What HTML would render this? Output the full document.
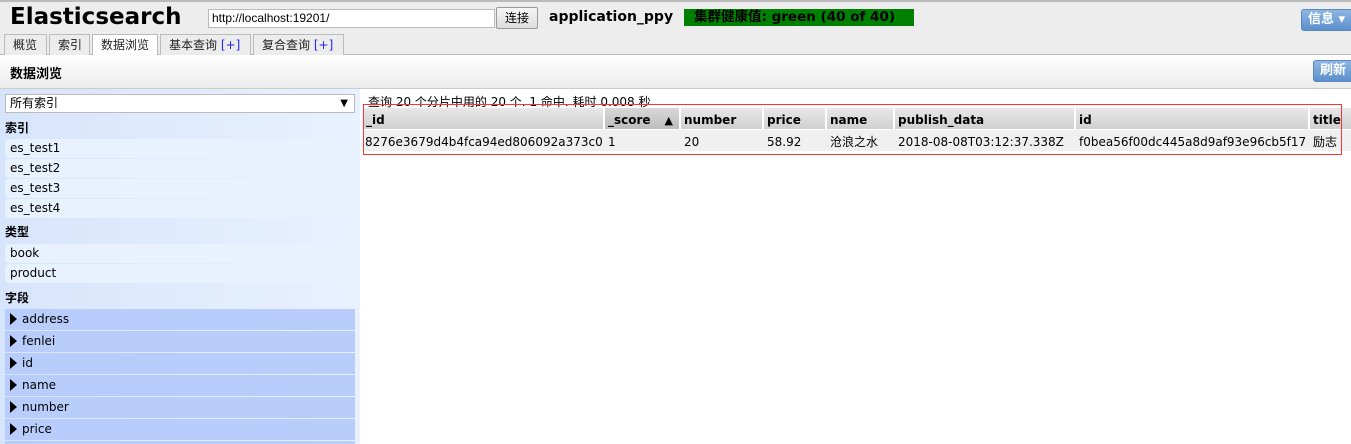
<!DOCTYPE html>
<html><head><meta charset="utf-8"><style>
*{box-sizing:border-box;margin:0;padding:0}
html,body{width:1351px;height:444px;overflow:hidden}
body{background:#fff;font-family:"DejaVu Sans","Noto Sans CJK SC",sans-serif;font-size:12px;color:#000;position:relative}
.a{position:absolute}
.top{left:0;top:0;width:1351px;height:55px;background:#ededed;border-top:2px solid #bbb;border-bottom:1px solid #bbb}
.tab{top:34px;height:21px;border:1px solid #bbb;border-bottom:none;background:#ececec;font-size:12px;line-height:21px;padding-left:8px;color:#222}
.tab.act{background:#fff;height:22px}
.plus{color:#22f}
.bar{left:0;top:55px;width:1351px;height:34px;background:linear-gradient(#fff,#ececec);border-bottom:1px solid #ccc}
.btn{background:linear-gradient(#8fb6e4,#5c8fcc);color:#fff;font-weight:bold;border:1px solid #5a87c0;border-radius:3px;font-size:13px;line-height:19px;padding-left:6px}
.side{left:0;top:89px;width:360px;height:355px;background:linear-gradient(90deg,#d7e5fc,#e8f1fe)}
.lbl{left:5px;font-weight:bold;font-size:12px}
.it{left:5px;width:350px;height:19px;background:#e8f1fe;border-radius:4px;padding-left:5px;line-height:19px;font-size:12px}
.fd{left:5px;width:350px;height:21px;background:#b8cdfb;padding-left:5px;line-height:21px;font-size:12px}
.tri{display:inline-block;width:0;height:0;border-left:7px solid #000;border-top:6px solid transparent;border-bottom:6px solid transparent;vertical-align:-2px;margin-right:5px}
.th{top:108px;height:21px;background:linear-gradient(#e8e8e8,#cfcfcf);font-weight:bold;font-size:12px;line-height:21px;padding:2px 0 0 3px;border-right:2px solid #fff}
.td{top:130px;height:21px;background:#f0f0f0;font-size:12px;line-height:21px;padding:2px 0 0 3px;white-space:nowrap;overflow:hidden}
</style></head><body>
<div class="a top"></div>
<div class="a" style="left:10px;top:4px;font-size:23px;font-weight:bold">Elasticsearch</div>
<div class="a" style="left:208px;top:9px;width:287px;height:19px;background:#fff;border:1px solid #bbb;font-family:'Liberation Sans',sans-serif;font-size:12px;line-height:17px;padding-left:3px">http://localhost:19201/</div>
<div class="a" style="left:496px;top:7px;width:42px;height:22px;background:linear-gradient(#f6f6f6,#ddd);border:1px solid #999;border-radius:2px;text-align:center;line-height:20px;font-size:12px">连接</div>
<div class="a" style="left:549px;top:9px;font-size:14px;font-weight:bold">application_ppy</div>
<div class="a" style="left:684px;top:9px;width:230px;height:17px;background:#008000;color:#000;font-weight:bold;font-size:13.5px;line-height:17px;padding-left:10px">集群健康值: green (40 of 40)</div>
<div class="a btn" style="left:1301px;top:9px;width:52px;height:22px">信息 ▾</div>
<div class="a tab" style="left:4px;width:43px">概览</div>
<div class="a tab" style="left:49px;width:41px">索引</div>
<div class="a tab act" style="left:92px;width:66px">数据浏览</div>
<div class="a tab" style="left:160px;width:91px">基本查询 <span class="plus">[+]</span></div>
<div class="a tab" style="left:253px;width:91px">复合查询 <span class="plus">[+]</span></div>
<div class="a bar"></div>
<div class="a" style="left:10px;top:63px;font-weight:bold;font-size:13px">数据浏览</div>
<div class="a btn" style="left:1313px;top:60px;width:40px;height:22px">刷新</div>
<div class="a side"></div>
<div class="a" style="left:5px;top:94px;width:350px;height:19px;background:#fff;border:1px solid #bbb;line-height:17px;padding-left:4px;font-size:12px">所有索引<span style="position:absolute;right:6px;font-size:10px">▼</span></div>
<div class="a lbl" style="top:119px">索引</div>
<div class="a it" style="top:139px">es_test1</div>
<div class="a it" style="top:159px">es_test2</div>
<div class="a it" style="top:179px">es_test3</div>
<div class="a it" style="top:199px">es_test4</div>
<div class="a lbl" style="top:223px">类型</div>
<div class="a it" style="top:244px">book</div>
<div class="a it" style="top:264px">product</div>
<div class="a lbl" style="top:289px">字段</div>
<div class="a fd" style="top:309px"><span class="tri"></span>address</div>
<div class="a fd" style="top:331px"><span class="tri"></span>fenlei</div>
<div class="a fd" style="top:353px"><span class="tri"></span>id</div>
<div class="a fd" style="top:375px"><span class="tri"></span>name</div>
<div class="a fd" style="top:397px"><span class="tri"></span>number</div>
<div class="a fd" style="top:419px"><span class="tri"></span>price</div>
<div class="a fd" style="top:441px;height:3px"></div>
<div class="a" style="left:368px;top:93px;font-size:12px">查询 20 个分片中用的 20 个. 1 命中. 耗时 0.008 秒</div>
<div class="a th" style="left:363px;width:242px">_id</div>
<div class="a th" style="left:605px;width:76px;background:linear-gradient(#d8d8d8,#bdbdbd)">_score <span style="float:right;margin-right:6px;font-size:11px">▲</span></div>
<div class="a th" style="left:681px;width:83px">number</div>
<div class="a th" style="left:764px;width:63px">price</div>
<div class="a th" style="left:827px;width:68px">name</div>
<div class="a th" style="left:895px;width:181px">publish_data</div>
<div class="a th" style="left:1076px;width:234px">id</div>
<div class="a th" style="left:1310px;width:41px;border-right:none">title</div>
<div class="a td" style="left:363px;width:242px;padding-left:2px">8276e3679d4b4fca94ed806092a373c0</div>
<div class="a td" style="left:605px;width:76px">1</div>
<div class="a td" style="left:681px;width:83px">20</div>
<div class="a td" style="left:764px;width:63px">58.92</div>
<div class="a td" style="left:827px;width:68px">沧浪之水</div>
<div class="a td" style="left:895px;width:181px">2018-08-08T03:12:37.338Z</div>
<div class="a td" style="left:1076px;width:234px">f0bea56f00dc445a8d9af93e96cb5f17</div>
<div class="a td" style="left:1310px;width:41px">励志</div>
<div class="a" style="left:363px;top:104px;width:979px;height:51px;border:1px solid #f33"></div>
</body></html>
